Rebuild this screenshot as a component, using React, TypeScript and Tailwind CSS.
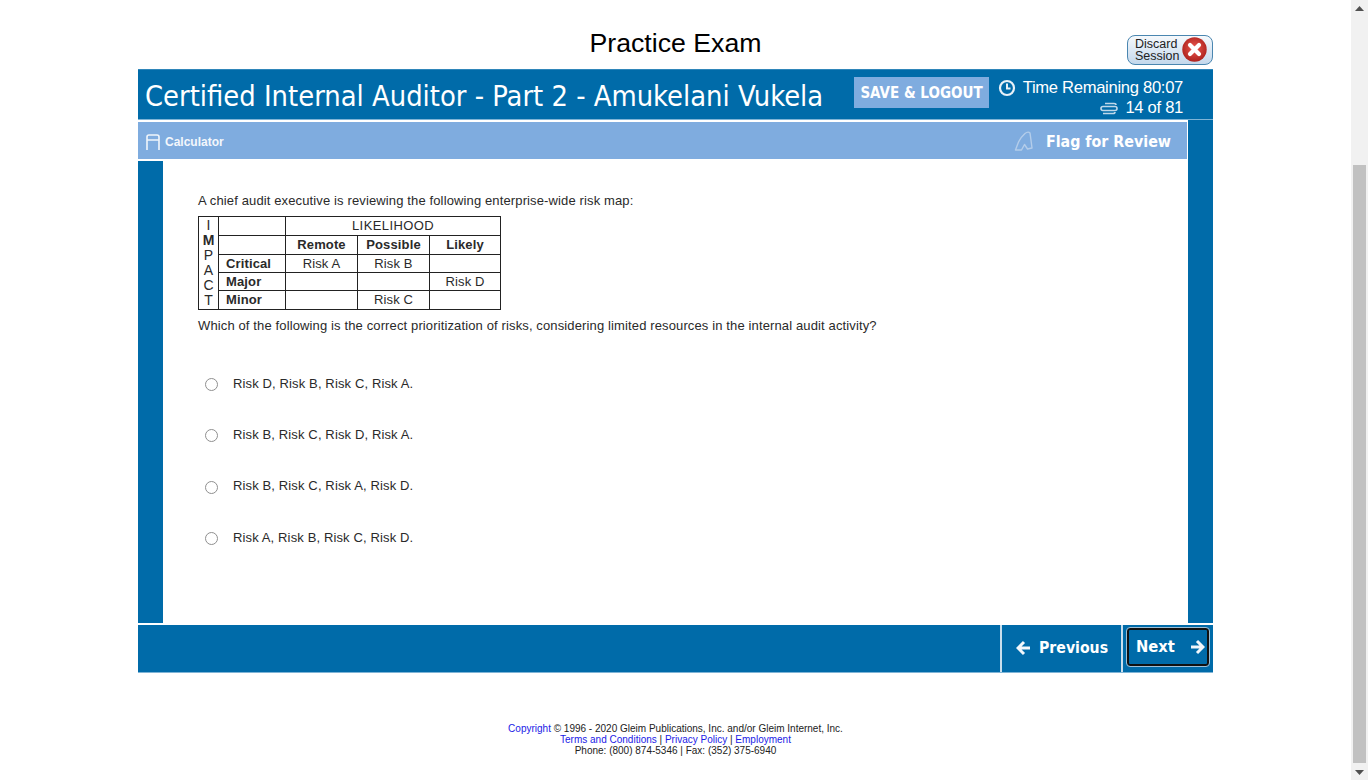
import React from 'react';

const answers = [
  'Risk D, Risk B, Risk C, Risk A.',
  'Risk B, Risk C, Risk D, Risk A.',
  'Risk B, Risk C, Risk A, Risk D.',
  'Risk A, Risk B, Risk C, Risk D.',
];

const tahoma = "font-['DejaVu_Sans_Condensed','DejaVu_Sans',sans-serif]";

const Cell: React.FC<{ children?: React.ReactNode; bold?: boolean; left?: boolean; colSpan?: number }> = ({
  children,
  bold,
  left,
  colSpan,
}) => (
  <td
    colSpan={colSpan}
    className={`border border-[#222] p-0 leading-[14px] ${bold ? 'font-bold' : ''} ${left ? 'text-left pl-[7px]' : 'text-center'}`}
  >
    {children}
  </td>
);

const ImpactTable = () => (
  <table className="h-[93px] w-[302px] table-fixed border-collapse text-[13px] tracking-[0.13px] text-[#2a2a2a]">
    <colgroup>
      <col className="w-[20px]" />
      <col className="w-[67px]" />
      <col className="w-[72px]" />
      <col className="w-[72px]" />
      <col className="w-[71px]" />
    </colgroup>
    <tbody>
      <tr className="h-[19px]">
        <td rowSpan={5} className="border border-[#222] p-0 text-center text-[14px] leading-[15px] tracking-normal">
          I<br /><b>M</b><br />P<br />A<br />C<br />T
        </td>
        <Cell />
        <Cell colSpan={3}><span className="tracking-[0.4px]">LIKELIHOOD</span></Cell>
      </tr>
      <tr className="h-[19px]">
        <Cell />
        <Cell bold>Remote</Cell>
        <Cell bold>Possible</Cell>
        <Cell bold>Likely</Cell>
      </tr>
      <tr className="h-[18px]">
        <Cell bold left>Critical</Cell>
        <Cell>Risk A</Cell>
        <Cell>Risk B</Cell>
        <Cell />
      </tr>
      <tr className="h-[18px]">
        <Cell bold left>Major</Cell>
        <Cell />
        <Cell />
        <Cell>Risk D</Cell>
      </tr>
      <tr className="h-[19px]">
        <Cell bold left>Minor</Cell>
        <Cell />
        <Cell>Risk C</Cell>
        <Cell />
      </tr>
    </tbody>
  </table>
);

const DiscardIcon = () => (
  <svg width="25" height="25" viewBox="0 0 25 25">
    <defs>
      <radialGradient id="dg" cx="50%" cy="45%" r="60%">
        <stop offset="0%" stopColor="#ee5b52" />
        <stop offset="100%" stopColor="#a81d1a" />
      </radialGradient>
    </defs>
    <circle cx="12.5" cy="12.5" r="12.2" fill="url(#dg)" />
    <path d="M8 8l9 9M17 8l-9 9" stroke="#fff" strokeWidth="4.2" strokeLinecap="round" />
  </svg>
);

const App = () => {
  return (
    <div className="flex h-[780px] w-[1368px] overflow-hidden bg-white font-['Liberation_Sans',Arial,sans-serif]">
      <div className="w-[1351px]">
        <div className="mx-auto w-[1075px]">
          <div className="relative h-[69px] text-center">
            <h1 className="pt-[25px] text-[26.7px] leading-[36px] text-black">Practice Exam</h1>
            <button className="absolute right-0 top-[35px] h-[30px] w-[86px] rounded-[8px] border-[1.5px] border-[#4a86b0] bg-gradient-to-b from-[#f6f9fc] to-[#c4d8ec] pl-[7px] text-left text-[12.5px] leading-[12px] text-[#222]">
              <span className="block">Discard<br />Session</span>
              <span className="absolute right-[5px] top-[1px] leading-none"><DiscardIcon /></span>
            </button>
          </div>

          <div className="flex h-[51px] border-y border-t-[#2f86ba] border-b-[#7fb4d6] bg-[#006ba9] text-white">
            <div className={`${tahoma} w-[716px] shrink-0 pl-[7px] pt-[6px] text-[28.8px] leading-[40px] whitespace-nowrap`}>
              Certified Internal Auditor - Part 2 - Amukelani Vukela
            </div>
            <button className={`${tahoma} mt-[7px] flex h-[31px] w-[135px] shrink-0 items-center justify-center bg-[#7facdf] pt-[1px] text-[15px] font-bold text-white whitespace-nowrap`}>
              SAVE &amp; LOGOUT
            </button>
            <div className="min-w-0 flex-1 whitespace-nowrap pr-[30px] pt-[8px] text-right text-[16.6px] leading-[20px] tracking-[-0.3px]">
              <div className="flex items-center justify-end gap-[7px]">
                <svg width="18" height="18" viewBox="0 0 18 18" fill="none" stroke="#e8f1f8" strokeWidth="2.2">
                  <circle cx="9" cy="9" r="7" />
                  <path d="M9 4.5V9.5H12.5" strokeWidth="2" />
                </svg>
                <span>Time Remaining 80:07</span>
              </div>
              <div className="flex items-center justify-end gap-[7px]">
                <svg width="18" height="13" viewBox="0 0 18 13" fill="none" stroke="#c0d8ea" strokeWidth="1.6">
                  <path d="M5 1.5h9q2 0 2 1.5M3 11.5h10q2 0 2-1.5" />
                  <rect x="1" y="4.5" width="16" height="4" rx="2" />
                </svg>
                <span>14 of 81</span>
              </div>
            </div>
          </div>

          <div className="flex bg-[#006ba9]">
            <div className="w-[1050px]">
              <div className="flex h-[41px] items-center justify-between border-y-2 border-r border-white bg-[#7facdf] pl-[8px] pr-[16px] pt-[2px]">
                <div className="flex items-center gap-[5px] text-[12px] font-bold text-[#f3f7fc]">
                  <svg width="14" height="16" viewBox="0 0 14 16" fill="none" stroke="#f0f5fb" strokeWidth="1.6">
                    <path d="M1 16V3q0-2 2-2h8q2 0 2 2v13M1 6h12" />
                  </svg>
                  <span>Calculator</span>
                </div>
                <div className="flex items-center gap-[13px]">
                  <svg width="19" height="20" viewBox="0 0 19 20" fill="none" stroke="#b4cdea" strokeWidth="1.4">
                    <path d="M1.5 19L4.5 11Q6.5 6.5 11 2.5Q14 0 16 2Q17 9 18 17L13.5 18L10.5 13.5L7.5 19z" strokeLinejoin="round" />
                  </svg>
                  <span className={`${tahoma} text-[15.85px] font-bold text-white`}>Flag for Review</span>
                </div>
              </div>
              <div className="flex h-[462px]">
                <div className="w-[25px]" />
                <div className="w-[1025px] bg-white pl-[35px] pt-[32px] text-[13px] tracking-[0.13px] text-[#2a2a2a]">
                  <p className="mb-[7px] leading-[16px]">A chief audit executive is reviewing the following enterprise-wide risk map:</p>
                  <ImpactTable />
                  <p className="mt-[8px] leading-[16px]">Which of the following is the correct prioritization of risks, considering limited resources in the internal audit activity?</p>
                  <div className="mt-[25px] flex flex-col">
                    {answers.map((a) => (
                      <label key={a} className="flex h-[51.3px] items-center">
                        <input type="radio" name="answer" className="ml-[7px] h-[13px] w-[13px] appearance-none rounded-full border border-[#8f8f8f] bg-white" />
                        <span className="ml-[15px] -translate-y-[0.6px]">{a}</span>
                      </label>
                    ))}
                  </div>
                </div>
              </div>
            </div>
            <div className="flex-1" />
          </div>

          <div className="flex h-[50px] justify-end border-t-2 border-t-white border-b border-b-[#7fb4d6] bg-[#006ba9] text-white">
            <button className={`${tahoma} flex w-[121px] items-center gap-[8px] border-l-2 border-[#c9deec] pb-[2px] pl-[14px] text-[15.7px] font-bold`}>
              <svg width="15" height="16" viewBox="0 0 15 16" fill="none" stroke="#f2f7fb" strokeWidth="3">
                <path d="M14 8H3M8 2L2 8l6 6" />
              </svg>
              Previous
            </button>
            <div className="flex w-[92px] items-center border-l-2 border-[#c9deec] pb-[3px] pl-[4px]">
              <button className={`${tahoma} flex h-[38px] w-[82px] items-center justify-between rounded-[3px] border-2 border-[#111] pl-[7px] pr-[2px] text-[16.4px] font-bold outline outline-1 outline-[#9dbfd6]`}>
                Next
                <svg width="15" height="16" viewBox="0 0 15 16" fill="none" stroke="#f2f7fb" strokeWidth="3">
                  <path d="M1 8h11M7 2l6 6-6 6" />
                </svg>
              </button>
            </div>
          </div>

          <div className="pt-[50px] text-center text-[10px] leading-[11px] text-[#222]">
            <div><span className="text-[#1a1ae6]">Copyright</span> © 1996 - 2020 Gleim Publications, Inc. and/or Gleim Internet, Inc.</div>
            <div>
              <span className="text-[#1a1ae6]">Terms and Conditions</span> | <span className="text-[#1a1ae6]">Privacy Policy</span> | <span className="text-[#1a1ae6]">Employment</span>
            </div>
            <div>Phone: (800) 874-5346 | Fax: (352) 375-6940</div>
          </div>
        </div>
      </div>

      <div className="flex h-[780px] w-[17px] flex-col bg-[#f1f1f1]">
        <div className="flex h-[17px] items-center justify-center">
          <svg width="9" height="6" viewBox="0 0 9 6"><path d="M4.5 0L9 5H0z" fill="#505050" /></svg>
        </div>
        <div className="mx-[2px] mt-[148px] h-[598px] bg-[#c1c1c1]" />
        <div className="flex h-[17px] items-center justify-center">
          <svg width="9" height="6" viewBox="0 0 9 6"><path d="M4.5 6L9 1H0z" fill="#505050" /></svg>
        </div>
      </div>
    </div>
  );
};

export default App;
